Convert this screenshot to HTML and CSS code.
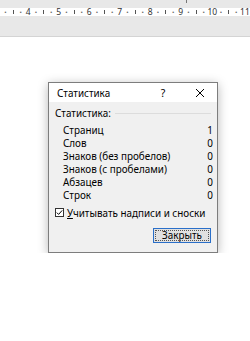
FILE: index.html
```html
<!DOCTYPE html>
<html lang="ru">

<head>
  <meta charset="UTF-8">
  <meta name="viewport" content="width=device-width, initial-scale=1.0">
  <title>Статистика</title>
  <link rel="stylesheet" href="styles.css">
</head>

<body>
  <div class="topbar"><i class="tab"></i></div>
  <div class="ruler">
    <span class="dot">·</span><span class="tick"></span><span class="dot">·</span>
    <span>4</span><span class="dot">·</span><span class="tick"></span><span class="dot">·</span>
    <span>5</span><span class="dot">·</span><span class="tick"></span><span class="dot">·</span>
    <span>6</span><span class="dot">·</span><span class="tick"></span><span class="dot">·</span>
    <span>7</span><span class="dot">·</span><span class="tick"></span><span class="dot">·</span>
    <span>8</span><span class="dot">·</span><span class="tick"></span><span class="dot">·</span>
    <span>9</span><span class="dot">·</span><span class="tick"></span><span class="dot">·</span>
    <span>10</span><span class="dot">·</span><span class="tick"></span><span class="dot">·</span>
    <span>11</span>
  </div>
  <div class="under"></div>

  <div class="page">
    <div class="dialog">
      <div class="title">
        <span class="caption">Статистика</span>
        <span class="help">?</span>
        <svg class="close" width="10" height="10" viewBox="0 0 10 10">
          <path d="M1 1L9 9M9 1L1 9" stroke="#000" stroke-width="1" fill="none" />
        </svg>
      </div>
      <div class="body">
        <div class="group"><span>Статистика:</span><i></i></div>
        <table class="stats">
          <tr><td>Страниц</td><td>1</td></tr>
          <tr><td>Слов</td><td>0</td></tr>
          <tr><td>Знаков (без пробелов)</td><td>0</td></tr>
          <tr><td>Знаков (с пробелами)</td><td>0</td></tr>
          <tr><td>Абзацев</td><td>0</td></tr>
          <tr><td>Строк</td><td>0</td></tr>
        </table>
        <label class="check">
          <svg width="9" height="9" viewBox="0 0 9 9">
            <rect x="0.5" y="0.5" width="8" height="8" fill="#fff" stroke="#333" />
            <path d="M1.8 4.6L3.6 6.4L7.2 2.4" stroke="#000" stroke-width="1" fill="none" />
          </svg>
          <span><u>У</u>читывать надписи и сноски</span>
        </label>
        <div class="buttons">
          <button>Закрыть</button>
        </div>
      </div>
    </div>
  </div>
</body>

</html>
```
FILE: styles.css
```css
body {
  margin: 0;
  font-family: "Noto Sans", "Open Sans", sans-serif;
  color: #000;
  background: #fff;
  overflow: hidden;
}
.topbar {
  height: 8px;
  background: #e8e8e8;
  position: relative;
}
.topbar .tab {
  position: absolute;
  left: 186px;
  top: 0;
  width: 1px;
  height: 3px;
  background: #777;
}
.ruler {
  height: 8px;
  background: #fff;
  display: flex;
  align-items: center;
  padding-left: 1.6px;
  font-size: 8.5px;
  color: #333;
}
.ruler span {
  flex: 0 0 7.625px;
  display: flex;
  justify-content: center;
  align-items: center;
  height: 8px;
  line-height: 12px;
  white-space: nowrap;
}
.ruler .dot {
  color: #666;
  font-weight: bold;
}
.ruler .tick::before {
  content: "";
  width: 1px;
  height: 4px;
  background: #555;
}
.under {
  height: 20px;
  background: #e8e8e8;
  border-bottom: 1px solid #d4d4d4;
}
.page {
  padding: 45px 0 0 48px;
}
.dialog {
  width: 168px;
  height: 169px;
  border: 1px solid #7d7d7d;
  box-shadow: 0 2px 10px rgba(0, 0, 0, 0.28);
  background: #f0f0f0;
  font-size: 9.9px;
}
.title {
  height: 19px;
  background: #fff;
  display: flex;
  align-items: center;
  padding-left: 8px;
}
.caption {
  flex: 1;
}
.help {
  width: 12px;
  margin-right: 26px;
  text-align: center;
  font-size: 10.5px;
}
.close {
  margin-right: 12px;
}
.body {
  padding: 4px 4px 0 6px;
}
.group {
  display: flex;
  align-items: center;
  height: 14px;
}
.group i {
  flex: 1;
  height: 1px;
  background: #dcdcdc;
  margin-left: 4px;
  margin-right: 2px;
}
.stats {
  width: 100%;
  border-collapse: collapse;
  margin-top: 4px;
}
.stats td {
  padding: 0;
  height: 13px;
  line-height: 13px;
}
.stats td:first-child {
  padding-left: 8px;
}
.stats td:last-child {
  text-align: right;
}
.check {
  display: flex;
  align-items: center;
  gap: 3px;
  height: 15px;
  margin-top: 3px;
}
.check svg {
  display: block;
}
.buttons {
  display: flex;
  justify-content: flex-end;
  margin-top: 8px;
  padding-right: 2px;
}
.buttons button {
  width: 58px;
  height: 15px;
  padding: 0;
  font-family: inherit;
  font-size: 9.9px;
  line-height: 11px;
  color: #000;
  background: #e1e1e1;
  border: 1px solid #2a6fc9;
  outline: 1px dotted #555;
  outline-offset: -3px;
}
```
